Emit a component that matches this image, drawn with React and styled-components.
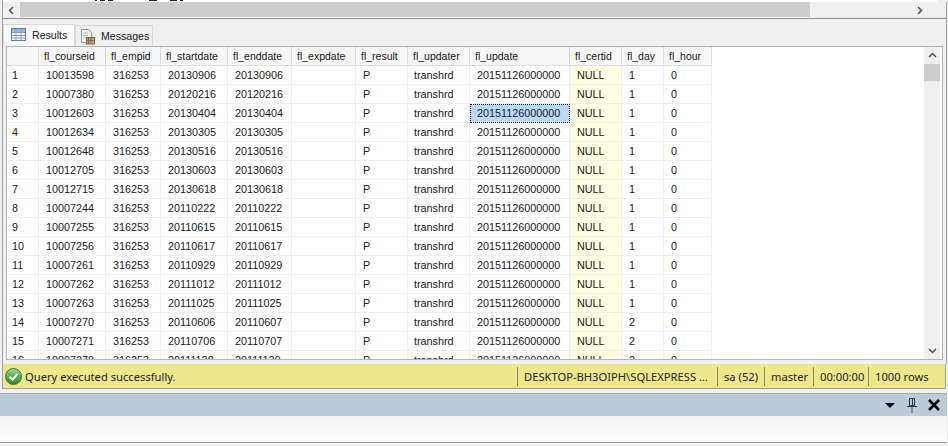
import React from 'react';
import styled, { createGlobalStyle } from 'styled-components';

const GlobalStyle = createGlobalStyle`
  html, body {
    margin: 0;
    padding: 0;
    width: 948px;
    height: 446px;
    overflow: hidden;
    background: #f0f0f0;
  }
  * {
    box-sizing: border-box;
  }
`;

const COLUMNS = '32px 67px 55px 67px 64px 64px 52px 62px 100px 52px 42px 48px';

const columns = [
  '', 'fl_courseid', 'fl_empid', 'fl_startdate', 'fl_enddate', 'fl_expdate',
  'fl_result', 'fl_updater', 'fl_update', 'fl_certid', 'fl_day', 'fl_hour',
];

const rows = [
  ['10013598', '20130906', '20130906', 1],
  ['10007380', '20120216', '20120216', 1],
  ['10012603', '20130404', '20130404', 1],
  ['10012634', '20130305', '20130305', 1],
  ['10012648', '20130516', '20130516', 1],
  ['10012705', '20130603', '20130603', 1],
  ['10012715', '20130618', '20130618', 1],
  ['10007244', '20110222', '20110222', 1],
  ['10007255', '20110615', '20110615', 1],
  ['10007256', '20110617', '20110617', 1],
  ['10007261', '20110929', '20110929', 1],
  ['10007262', '20111012', '20111012', 1],
  ['10007263', '20111025', '20111025', 1],
  ['10007270', '20110606', '20110607', 2],
  ['10007271', '20110706', '20110707', 2],
  ['10007278', '20111128', '20111129', 2],
];

const Page = styled.div`
  width: 948px;
  height: 446px;
  display: flex;
  flex-direction: column;
  overflow: hidden;
  background: #f0f0f0;
  font-family: "Liberation Sans", Arial, sans-serif;
  color: #1a1a1a;
`;

const EditorEdge = styled.div`
  height: 2px;
  margin-right: 11px;
  margin-left: 2px;
  background: #fff;
  border-left: 1px solid #a0a0a0;
  overflow: hidden;
`;

const CutText = styled.svg`
  display: block;
  margin-left: 92px;
`;

const HScroll = styled.div`
  height: 17px;
  margin-left: 2px;
  margin-right: 1px;
  display: flex;
  background: #f0f0f0;
  border-left: 1px solid #a0a0a0;
  border-right: 1px solid #a0a0a0;
  border-bottom: 1px solid #8f8f8f;
`;

const ScrollButton = styled.div`
  width: ${(p) => p.$w || 17}px;
  height: ${(p) => p.$h || 16}px;
  flex: none;
  display: flex;
  align-items: center;
  justify-content: center;
  color: #505050;
`;

const HThumb = styled.div`
  width: 790px;
  height: 15px;
  background: #cdcdcd;
`;

const HTrack = styled.div`
  flex: 1;
  display: flex;
  justify-content: flex-end;
  padding-right: 18px;
`;

const ResultsFrame = styled.div`
  flex: none;
  height: 345px;
  margin: 0 1px 0 2px;
  padding: 5px 3px 0 0;
  border-left: 1px solid #a0a0a0;
  border-right: 1px solid #a0a0a0;
  display: flex;
  flex-direction: column;
`;

const TabStrip = styled.div`
  height: 22px;
  flex: none;
  display: flex;
  align-items: flex-end;
`;

const Tab = styled.div`
  height: ${(p) => (p.$active ? 22 : 21)}px;
  width: ${(p) => (p.$active ? 72 : 78)}px;
  display: flex;
  align-items: center;
  gap: 6px;
  padding-left: ${(p) => (p.$active ? 7 : 4)}px;
  padding-bottom: ${(p) => (p.$active ? 2 : 0)}px;
  font-size: 10.6px;
  background: ${(p) => (p.$active ? '#fafafa' : '#f0f0f0')};
  border: 1px solid #d9d9d9;
  border-bottom: none;
`;

const GridBox = styled.div`
  height: 314px;
  flex: none;
  display: flex;
  margin-left: 3px;
  background: #fff;
  border: 1px solid #b4b4b4;
  overflow: hidden;
`;

const Table = styled.div`
  flex: 1;
  overflow: hidden;
  font-size: 10.8px;
`;

const Row = styled.div`
  display: grid;
  grid-template-columns: ${COLUMNS};
  height: 19px;
`;

const HeadCell = styled.div`
  background: #f6f6f6;
  border-right: 1px solid #dcdcdc;
  border-bottom: 1px solid #dcdcdc;
  font-size: 10.5px;
  line-height: 18px;
  padding-left: 5px;
  white-space: nowrap;
  overflow: hidden;
`;

const Cell = styled.div`
  border-right: 1px solid #eeeeee;
  border-bottom: 1px solid #eeeeee;
  line-height: 18px;
  padding-left: ${(p) => p.$pad ?? 7}px;
  white-space: nowrap;
  background: ${(p) => (p.$null ? '#ffffe1' : p.$selected ? '#b9d9fb' : '#fff')};
  outline: ${(p) => (p.$selected ? '1px dotted #000' : 'none')};
  outline-offset: -1px;
`;

const VScroll = styled.div`
  width: 16px;
  flex: none;
  margin-right: 2px;
  display: flex;
  flex-direction: column;
  background: #f0f0f0;
`;

const VThumb = styled.div`
  height: 17px;
  background: #cdcdcd;
`;

const VTrack = styled.div`
  flex: 1;
`;

const StatusBar = styled.div`
  height: 25px;
  flex: none;
  margin: 0 2px 0 2px;
  display: flex;
  align-items: center;
  background: #f0e68c;
  border-left: 1px solid #a0a0a0;
  border-right: 1px solid #a0a0a0;
  border-bottom: 1px solid #a0a0a0;
  font-family: "Noto Sans", "Open Sans", sans-serif;
  font-size: 11.2px;
  color: #222;
`;

const StatusMessage = styled.div`
  flex: 1;
  display: flex;
  align-items: center;
  gap: 3px;
  padding-left: 2px;
`;

const StatusItem = styled.div`
  width: ${(p) => p.$w}px;
  height: 19px;
  line-height: 19px;
  padding-left: 6px;
  border-left: 1px solid #8d8a62;
  white-space: nowrap;
  overflow: hidden;
`;

const Gap = styled.div`
  height: 4px;
  flex: none;
  background: #f0f0f0;
`;

const PaneHeader = styled.div`
  height: 23px;
  flex: none;
  display: flex;
  justify-content: flex-end;
  align-items: center;
  gap: 8px;
  margin-right: 1px;
  padding-right: 6px;
  background: #bccbda;
  border-top: 1px solid #a9a9a9;
`;

const PaneBody = styled.div`
  height: 27px;
  flex: none;
  margin-right: 1px;
  background: linear-gradient(#f1f1f1, #fff);
  border-bottom: 1px solid #a0a0a0;
`;

const GridIcon = () => (
  <svg width="15" height="13" viewBox="0 0 15 13">
    <rect x="0.5" y="0.5" width="14" height="12" fill="#fff" stroke="#5f7fa8" />
    <rect x="1" y="1" width="13" height="3" fill="#9db8d8" />
    <path d="M5 1v11M10 1v11M1 4.5h13M1 7.5h13M1 10h13" stroke="#7f9cc0" fill="none" />
  </svg>
);

const DocIcon = () => (
  <svg width="15" height="17" viewBox="0 0 15 17">
    <path d="M1.5 1.5h7l3 3v10h-10z" fill="#f7f7f7" stroke="#8a9bb0" />
    <path d="M3 5h5M3 7.5h5M3 10h3" stroke="#a8b6c6" fill="none" />
    <rect x="6.5" y="9.5" width="8" height="6.5" fill="#d9a441" stroke="#80622a" />
    <path d="M8.5 9.5v6.5M11 9.5v6.5M6.5 12.5h8" stroke="#5a6f8c" fill="none" />
  </svg>
);

const CheckIcon = () => (
  <svg width="17" height="17" viewBox="0 0 17 17">
    <defs>
      <linearGradient id="okFill" x1="0" y1="0" x2="0" y2="1">
        <stop offset="0" stopColor="#a8d69a" />
        <stop offset="0.5" stopColor="#5cad4f" />
        <stop offset="1" stopColor="#2f8a38" />
      </linearGradient>
    </defs>
    <circle cx="8.5" cy="8.5" r="8" fill="url(#okFill)" stroke="#2f7a2f" />
    <path d="M4.5 8.8l3 3 5-6" fill="none" stroke="#fff" strokeWidth="2" />
  </svg>
);

const Chevron = ({ d }) => (
  <svg width="9" height="9" viewBox="0 0 9 9">
    <path d={d} fill="none" stroke="#505050" strokeWidth="1.5" />
  </svg>
);

const PaneIcon = ({ children, h = 14 }) => (
  <svg width="14" height={h} viewBox={`0 0 14 ${h}`}>{children}</svg>
);

export default function App() {
  return (
    <Page>
      <GlobalStyle />
      <EditorEdge>
        <CutText width="90" height="1" viewBox="0 0 90 1">
          <path d="M0 0h2v1h-2zM5 0h5v1h-5zM13 0h5v1h-5zM54 0h8v1h-8zM75 0h7v1h-7zM85 0h3v1h-3z" fill="#222" />
        </CutText>
      </EditorEdge>
      <HScroll>
        <ScrollButton><Chevron d="M6 1L2.5 4.5L6 8" /></ScrollButton>
        <HThumb />
        <HTrack>
          <ScrollButton><Chevron d="M3 1L6.5 4.5L3 8" /></ScrollButton>
        </HTrack>
      </HScroll>
      <ResultsFrame>
        <TabStrip>
          <Tab $active><GridIcon />Results</Tab>
          <Tab><DocIcon />Messages</Tab>
        </TabStrip>
        <GridBox>
          <Table>
            <Row>
              {columns.map((c) => <HeadCell key={c}>{c}</HeadCell>)}
            </Row>
            {rows.map((r, i) => (
              <Row key={r[0]}>
                <Cell $pad={5}>{i + 1}</Cell>
                <Cell>{r[0]}</Cell>
                <Cell>316253</Cell>
                <Cell>{r[1]}</Cell>
                <Cell>{r[2]}</Cell>
                <Cell />
                <Cell>P</Cell>
                <Cell $pad={6}>transhrd</Cell>
                <Cell $selected={i === 2}>20151126000000</Cell>
                <Cell $null>NULL</Cell>
                <Cell>{r[3]}</Cell>
                <Cell>0</Cell>
              </Row>
            ))}
          </Table>
          <VScroll>
            <ScrollButton $w={16} $h={17}><Chevron d="M1 6L4.5 2.5L8 6" /></ScrollButton>
            <VThumb />
            <VTrack />
            <ScrollButton $w={16} $h={17}><Chevron d="M1 3L4.5 6.5L8 3" /></ScrollButton>
          </VScroll>
        </GridBox>
      </ResultsFrame>
      <StatusBar>
        <StatusMessage><CheckIcon />Query executed successfully.</StatusMessage>
        <StatusItem $w={200}>DESKTOP-BH3OIPH\SQLEXPRESS ...</StatusItem>
        <StatusItem $w={47}>sa (52)</StatusItem>
        <StatusItem $w={49}>master</StatusItem>
        <StatusItem $w={55}>00:00:00</StatusItem>
        <StatusItem $w={77}>1000 rows</StatusItem>
      </StatusBar>
      <Gap />
      <PaneHeader>
        <PaneIcon><path d="M2 5h10L7 10z" fill="#000" /></PaneIcon>
        <PaneIcon h={17}>
          <path d="M4.5 1.5h5v7h-5zM2 9.5h10" stroke="#333" fill="none" />
          <path d="M7.5 2v6" stroke="#333" fill="none" />
          <path d="M7 10v6" stroke="#777" strokeWidth="1.4" fill="none" />
        </PaneIcon>
        <PaneIcon><path d="M2 2l10 10M12 2L2 12" stroke="#000" strokeWidth="2.6" fill="none" /></PaneIcon>
      </PaneHeader>
      <PaneBody />
    </Page>
  );
}
